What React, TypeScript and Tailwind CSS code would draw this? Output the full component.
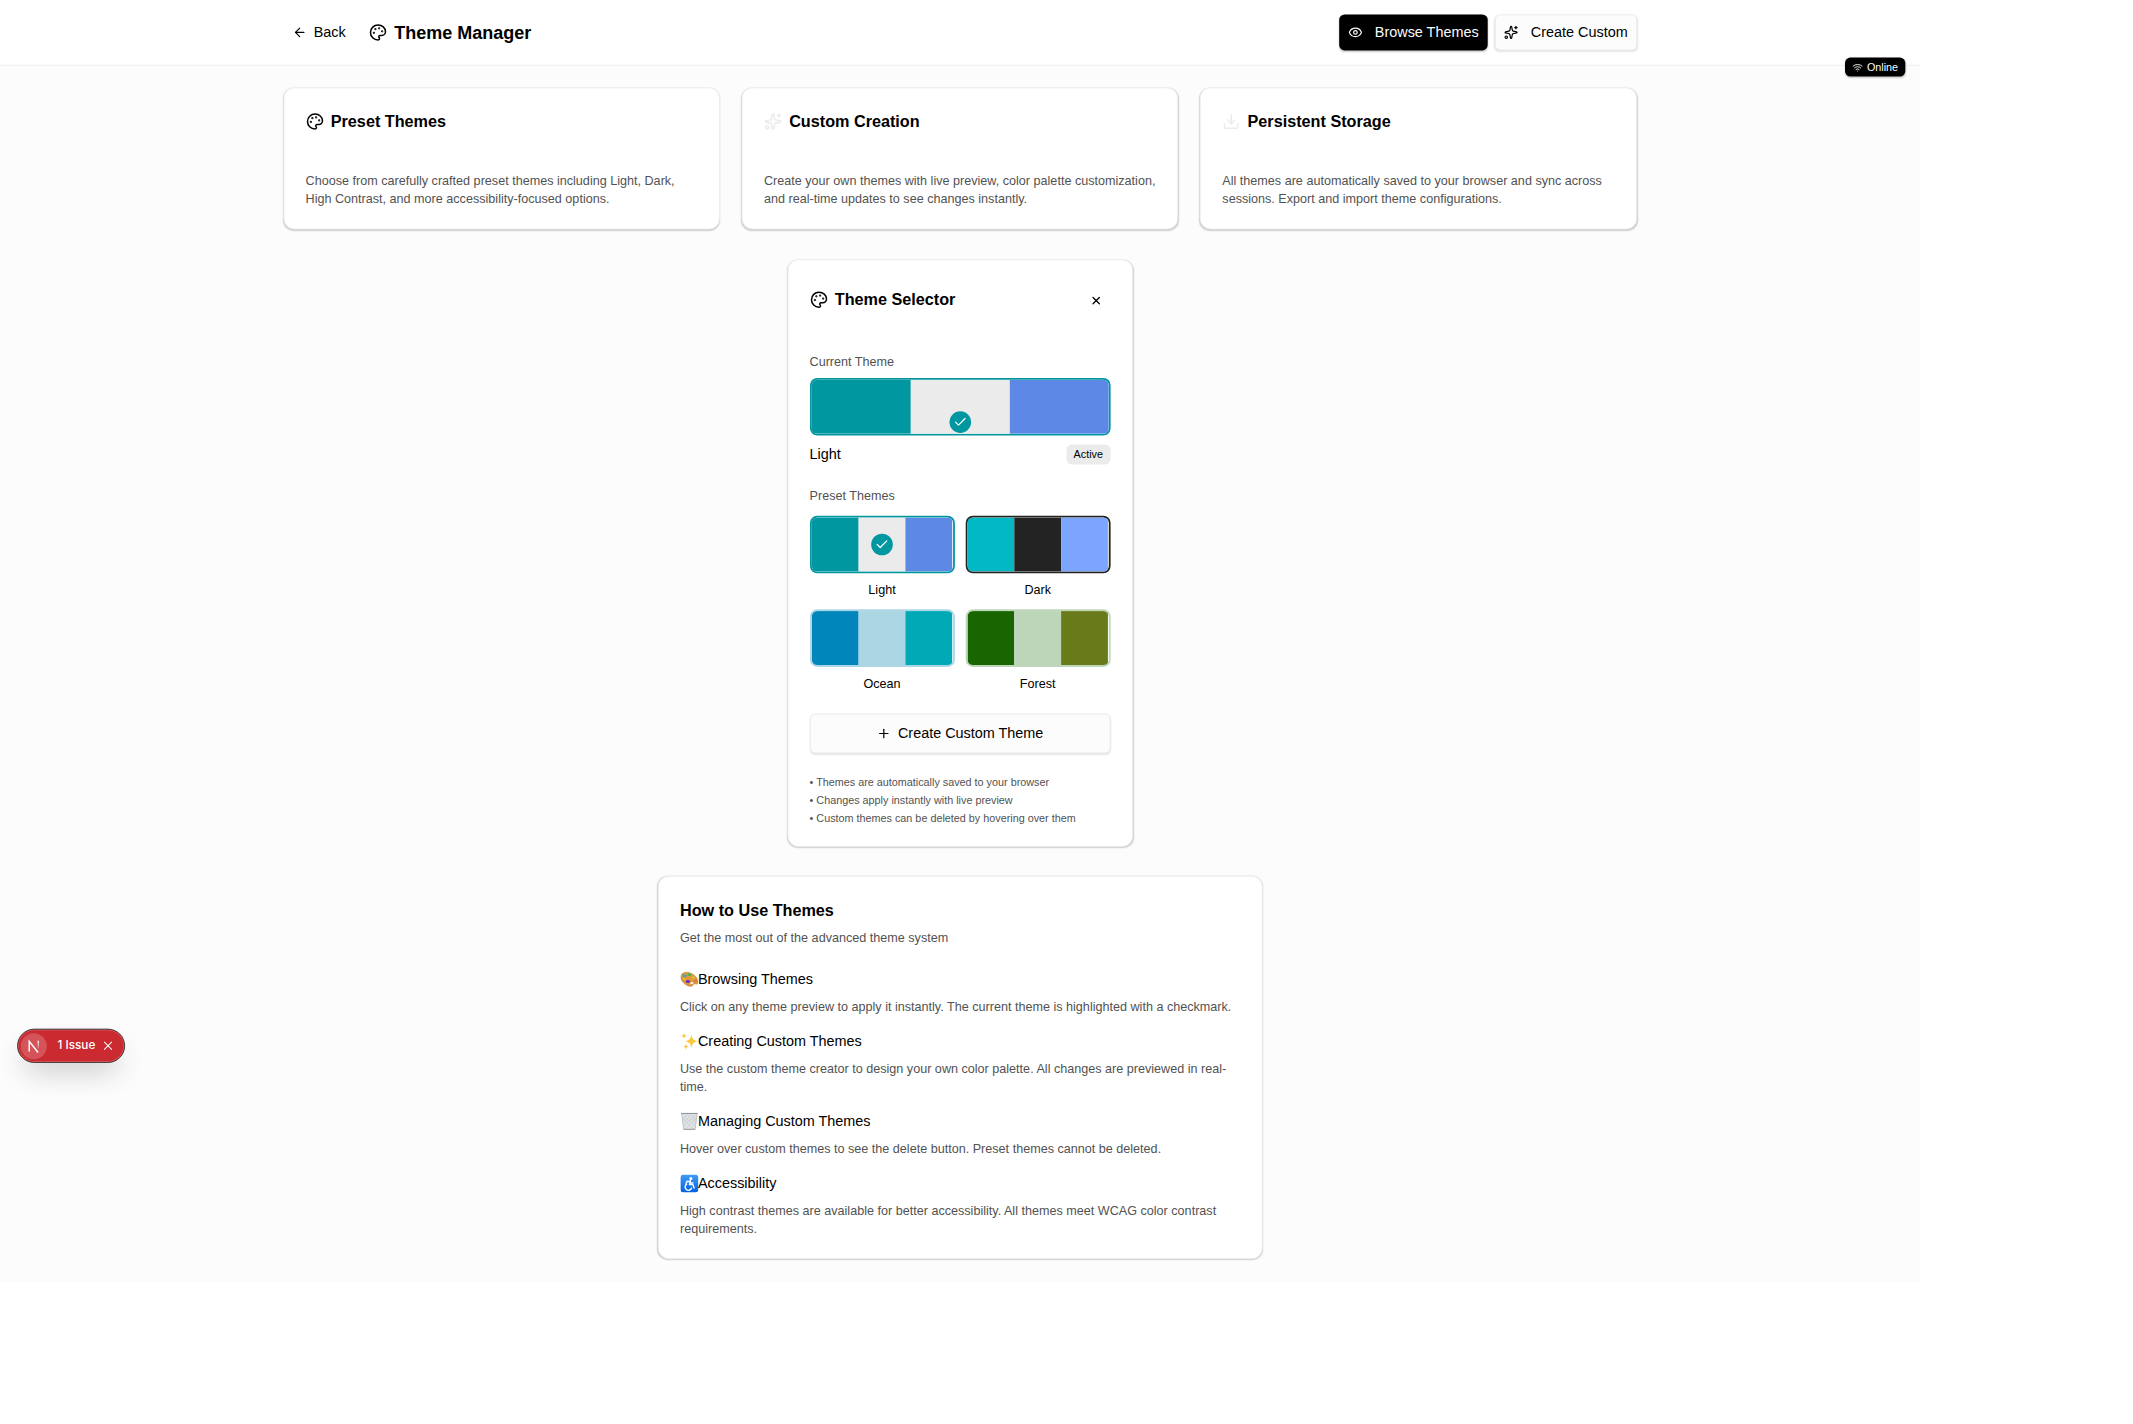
import React from 'react';
import { ArrowLeft, Check, Download, Eye, Palette, Plus, Sparkles, Wifi, X } from 'lucide-react';

type Swatch = { name: string; border: string; colors: string[]; active?: boolean };

const presets: Swatch[] = [
  { name: 'Light', border: 'border-[#0097a0]', colors: ['bg-[#0097a0]', 'bg-[#ebebeb]', 'bg-[#5d88e6]'], active: true },
  { name: 'Dark', border: 'border-[#232323]', colors: ['bg-[#00b9c4]', 'bg-[#232323]', 'bg-[#7ba5ff]'] },
  { name: 'Ocean', border: 'border-[#add6e5]', colors: ['bg-[#0086ba]', 'bg-[#add6e5]', 'bg-[#00a9b5]'] },
  { name: 'Forest', border: 'border-[#bdd6b9]', colors: ['bg-[#196600]', 'bg-[#bdd6b9]', 'bg-[#697a1a]'] },
];

const cardClass = 'rounded-xl border border-[#ebebeb] bg-white shadow-[0_1px_2px_rgba(0,0,0,0.12),0_1px_1px_rgba(0,0,0,0.08)]';

function CheckDot({ className }: { className: string }) {
  return (
    <span className={`absolute flex size-6 items-center justify-center rounded-full bg-[#0097a0] text-white ${className}`}>
      <Check className="size-4" />
    </span>
  );
}

function SwatchBar({ swatch, dot }: { swatch: Swatch; dot?: string }) {
  return (
    <div className={`relative flex h-16 overflow-hidden rounded-lg border-2 ${swatch.border}`}>
      {swatch.colors.map((c) => (
        <span key={c} className={`flex-1 ${c}`} />
      ))}
      {dot && <CheckDot className={dot} />}
    </div>
  );
}

function FeatureCard({ icon, title, text }: { icon: React.ReactNode; title: string; text: React.ReactNode }) {
  return (
    <section className={`h-[158px] p-6 ${cardClass}`}>
      <h2 className="flex h-[26px] items-center gap-2 text-lg font-bold">
        {icon}
        {title}
      </h2>
      <p className="mt-[42px] text-sm whitespace-nowrap text-[#525252]">{text}</p>
    </section>
  );
}

function PaletteEmoji() {
  return (
    <svg viewBox="0 0 18 18" className="size-5">
      <path d="M.5 6C1.200 2.200 5.800 1.200 10.500 3c4 1.700 7.600 5.600 7 9.400-.4 2.400-2 1.300-3.700 1.200-1.300.1-.6 2-2.400 2.400C7 16.800-.4 11.500.5 6z" fill="#dc9a3a" stroke="#b87a28" strokeWidth=".5" />
      <ellipse cx="4.200" cy="5.600" rx="2" ry="1.400" fill="#2fa9d8" />
      <ellipse cx="8.800" cy="4.500" rx="1.900" ry="1.200" fill="#43b649" />
      <ellipse cx="12.800" cy="7.200" rx="1.500" ry="1.200" fill="#e8b935" />
      <ellipse cx="3.900" cy="9" rx="1.500" ry="1.100" fill="#e8b52e" />
      <ellipse cx="7.500" cy="11.300" rx="2.200" ry="1.500" fill="#6d28c9" />
      <ellipse cx="15.200" cy="10.600" rx="1.500" ry="1.400" fill="#e86a4f" />
      <ellipse cx="11.400" cy="12.900" rx="1.500" ry="1" fill="#fff" />
    </svg>
  );
}

function SparklesEmoji() {
  return (
    <svg viewBox="0 0 18 18" className="size-5" fill="#fcc73c">
      <path d="M11 2.500q.7 5.800 6 6.500-5.300.7-6 6.500-.7-5.800-6-6.500 5.300-.7 6-6.500z" />
      <path d="M3.600.8q.3 2.500 2.600 2.800-2.300.3-2.600 2.800Q3.300 3.900 1 3.600 3.300 3.300 3.600.8z" />
      <path d="M5.600 11.500q.3 2.500 2.600 2.800-2.300.3-2.600 2.800-.3-2.500-2.600-2.800 2.300-.3 2.600-2.800z" />
    </svg>
  );
}

function TrashEmoji() {
  return (
    <svg viewBox="0 0 18 18" className="size-5">
      <path d="M1.200 1h15.600L14.700 17.200H3.300z" fill="#e0e3e5" stroke="#a0a6aa" strokeWidth=".6" />
      <path d="M2 5l11 12M3 3l12 11M7 2l8.500 9M11 2l5 6M16 5L5 17M15 3L3 14M11 2L2.500 11M7 2L2 8" stroke="#bcc2c5" strokeWidth=".5" />
      <path d="M.8 1h16.400" stroke="#8b9194" strokeWidth="1" />
      <path d="M3.400 16.900h11.200" stroke="#9aa0a4" strokeWidth="1" />
    </svg>
  );
}

function AccessEmoji() {
  return (
    <svg viewBox="0 0 18 18" className="size-5">
      <defs>
        <linearGradient id="access" x1="0" y1="0" x2="0" y2="1">
          <stop offset="0" stopColor="#3f9df5" />
          <stop offset="1" stopColor="#0560e0" />
        </linearGradient>
      </defs>
      <rect width="18" height="18" rx="3.500" fill="url(#access)" />
      <circle cx="10.500" cy="3.900" r="1.500" fill="#fff" />
      <path d="M10 6l-.9 4h3.300l1.300 3.600M9.800 7.300L6.900 6.700 5.600 8.600M10 8.400h2.600M6.300 9.700a3.300 3.300 0 1 0 4.800 4" fill="none" stroke="#fff" strokeWidth="1.400" strokeLinecap="round" strokeLinejoin="round" />
    </svg>
  );
}

const steps = [
  { icon: <PaletteEmoji />, title: 'Browsing Themes', lines: ['Click on any theme preview to apply it instantly. The current theme is highlighted with a checkmark.'] },
  { icon: <SparklesEmoji />, title: 'Creating Custom Themes', lines: ['Use the custom theme creator to design your own color palette. All changes are previewed in real-', 'time.'] },
  { icon: <TrashEmoji />, title: 'Managing Custom Themes', lines: ['Hover over custom themes to see the delete button. Preset themes cannot be deleted.'] },
  { icon: <AccessEmoji />, title: 'Accessibility', lines: ['High contrast themes are available for better accessibility. All themes meet WCAG color contrast', 'requirements.'] },
];

export default function App() {
  return (
    <div className="h-[1424px] w-[2133px] overflow-hidden bg-white">
      <div className="relative h-[1424px] w-[2133px] origin-top-left scale-90 bg-[#fcfcfc] font-['Liberation_Sans',Arial,sans-serif] text-base text-black">
        <header className="border-b border-[#ebebeb] bg-white">
          <div className="mx-auto flex h-[72px] w-[1504px] items-center justify-between">
            <div className="flex items-center gap-4">
              <button className="flex h-10 items-center gap-2 px-2.5">
                <ArrowLeft className="size-4" />
                Back
              </button>
              <h1 className="flex items-center gap-2 text-xl font-bold">
                <Palette className="size-5" />
                Theme Manager
              </h1>
            </div>
            <div className="flex gap-2">
              <button className="flex h-10 items-center gap-3.5 rounded-md bg-black px-2.5 text-[#fcfcfc] shadow-[0_1px_2px_rgba(0,0,0,0.2)]">
                <Eye className="size-4" />
                Browse Themes
              </button>
              <button className="flex h-10 items-center gap-3.5 rounded-md border border-[#ebebeb] bg-[#fcfcfc] pr-[9px] pl-[9px] shadow-[0_1px_2px_rgba(0,0,0,0.1)]">
                <Sparkles className="size-4" />
                Create Custom
              </button>
            </div>
          </div>
        </header>

        <main className="mx-auto w-[1504px] pt-6">
          <div className="grid grid-cols-3 gap-6">
            <FeatureCard
              icon={<Palette className="size-5" />}
              title="Preset Themes"
              text={<>Choose from carefully crafted preset themes including Light, Dark,<br />High Contrast, and more accessibility-focused options.</>}
            />
            <FeatureCard
              icon={<Sparkles className="size-5 text-[#ebebeb]" />}
              title="Custom Creation"
              text={<>Create your own themes with live preview, color palette customization,<br />and real-time updates to see changes instantly.</>}
            />
            <FeatureCard
              icon={<Download className="size-5 text-[#ebebeb]" />}
              title="Persistent Storage"
              text={<>All themes are automatically saved to your browser and sync across<br />sessions. Export and import theme configurations.</>}
            />
          </div>

          <section className={`mx-auto mt-[33px] h-[653px] w-96 p-6 ${cardClass}`}>
            <div className="flex h-10 items-center justify-between">
              <h2 className="flex items-center gap-2 text-lg font-bold">
                <Palette className="size-5" />
                Theme Selector
              </h2>
              <button className="flex w-8 justify-center pt-px">
                <X className="size-3.5" strokeWidth={2.4} />
              </button>
            </div>
            <h3 className="mt-[39px] text-sm text-[#525252]">Current Theme</h3>
            <div className="mt-2">
              <SwatchBar swatch={presets[0]} dot="left-[153px] top-[35px]" />
            </div>
            <div className="mt-[9px] flex h-6 items-center justify-between">
              <span>Light</span>
              <span className="rounded-md bg-[#ebebeb] px-2 py-[3px] text-xs">Active</span>
            </div>
            <h3 className="mt-[23px] text-sm text-[#525252]">Preset Themes</h3>
            <div className="mt-[13px] grid grid-cols-2 gap-x-3 gap-y-[13px]">
              {presets.map((p) => (
                <div key={p.name}>
                  <SwatchBar swatch={p} dot={p.active ? 'left-[66px] top-[18px]' : undefined} />
                  <p className="mt-2 h-[19px] text-center text-sm leading-5">{p.name}</p>
                </div>
              ))}
            </div>
            <button className="mt-[25px] flex h-11 w-full items-center justify-center gap-2 rounded-md border border-[#ebebeb] bg-[#fcfcfc] shadow-[0_1px_2px_rgba(0,0,0,0.1)]">
              <Plus className="size-4" />
              Create Custom Theme
            </button>
            <ul className="mt-6 space-y-1 text-xs text-[#525252]">
              <li>• Themes are automatically saved to your browser</li>
              <li>• Changes apply instantly with live preview</li>
              <li>• Custom themes can be deleted by hovering over them</li>
            </ul>
          </section>

          <section className={`mx-auto mt-8 h-[426px] w-2xl p-6 ${cardClass}`}>
            <h2 className="flex h-[27px] items-center text-lg font-bold">How to Use Themes</h2>
            <p className="mt-[7px] text-sm text-[#525252]">Get the most out of the advanced theme system</p>
            <div className="mt-[23px] space-y-4">
              {steps.map((s) => (
                <div key={s.title}>
                  <h3 className="flex h-[25px] items-center">
                    {s.icon}
                    <span className="-ml-[2px] pl-0.5">{s.title}</span>
                  </h3>
                  <p className="mt-2 text-sm whitespace-nowrap text-[#525252]">
                    {s.lines.map((l) => (
                      <span key={l} className="block">{l}</span>
                    ))}
                  </p>
                </div>
              ))}
            </div>
          </section>
        </main>

        <div className="absolute top-16 right-4 flex h-[21px] items-center gap-1 rounded-md bg-black px-2 text-xs text-[#fcfcfc] shadow-[0_1px_2px_rgba(0,0,0,0.2)]">
          <Wifi className="size-3" />
          Online
        </div>

        <div className="absolute top-[1143px] left-[19px] flex h-[38px] w-[120px] items-center rounded-full border border-[#333] bg-[#ca2a30] pl-[3px] text-white shadow-[0_16px_32px_-8px_rgba(0,0,0,0.24),inset_0_0_0_1px_rgba(255,255,255,0.2)]">
          <span className="flex size-[29px] items-center justify-center rounded-full bg-white/20">
            <svg viewBox="0 0 14 14" className="size-[15px]" fill="none" strokeWidth="1.500">
              <defs>
                <linearGradient id="fade" x1="0" y1="0" x2="0" y2="1">
                  <stop offset="0" stopColor="#fff" />
                  <stop offset="1" stopColor="#fff" stopOpacity=".1" />
                </linearGradient>
              </defs>
              <path d="M2.300 12.500V1.800l9.200 11.700" stroke="#fff" />
              <path d="M11 1.300h1.400v8H11z" fill="url(#fade)" />
            </svg>
          </span>
          <span className="ml-[12px] font-[Inter] text-[13px] font-medium">1 Issue</span>
          <X className="ml-[6px] size-4" strokeWidth={1.700} />
        </div>
      </div>
    </div>
  );
}
